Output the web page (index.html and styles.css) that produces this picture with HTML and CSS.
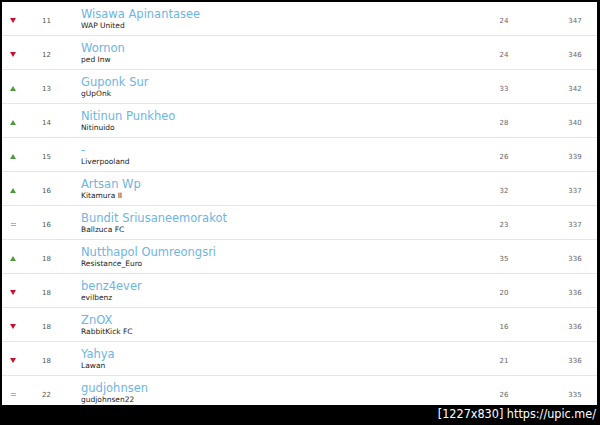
FILE: index.html
```html
<!DOCTYPE html>
<html lang="en">
<head>
    <meta charset="UTF-8">
    <title>Ranking</title>
    <link rel="stylesheet" href="styles.css">
</head>
<body>
    <div class="board">
        <div class="row"><span class="move down"></span><span class="rank">11</span><div class="player"><a class="name">Wisawa Apinantasee</a><span class="team">WAP United</span></div><span class="num">24</span><span class="num">347</span></div>
        <div class="row"><span class="move down"></span><span class="rank">12</span><div class="player"><a class="name">Wornon</a><span class="team">ped Inw</span></div><span class="num">24</span><span class="num">346</span></div>
        <div class="row"><span class="move up"></span><span class="rank">13</span><div class="player"><a class="name">Guponk Sur</a><span class="team">gUpOnk</span></div><span class="num">33</span><span class="num">342</span></div>
        <div class="row"><span class="move up"></span><span class="rank">14</span><div class="player"><a class="name">Nitinun Punkheo</a><span class="team">Nitinuido</span></div><span class="num">28</span><span class="num">340</span></div>
        <div class="row"><span class="move up"></span><span class="rank">15</span><div class="player"><a class="name">-</a><span class="team">Liverpooland</span></div><span class="num">26</span><span class="num">339</span></div>
        <div class="row"><span class="move up"></span><span class="rank">16</span><div class="player"><a class="name">Artsan Wp</a><span class="team">Kitamura II</span></div><span class="num">32</span><span class="num">337</span></div>
        <div class="row"><span class="move same"></span><span class="rank">16</span><div class="player"><a class="name">Bundit Sriusaneemorakot</a><span class="team">Ballzuca FC</span></div><span class="num">23</span><span class="num">337</span></div>
        <div class="row"><span class="move up"></span><span class="rank">18</span><div class="player"><a class="name">Nutthapol Oumreongsri</a><span class="team">Resistance_Euro</span></div><span class="num">35</span><span class="num">336</span></div>
        <div class="row"><span class="move down"></span><span class="rank">18</span><div class="player"><a class="name">benz4ever</a><span class="team">evilbenz</span></div><span class="num">20</span><span class="num">336</span></div>
        <div class="row"><span class="move down"></span><span class="rank">18</span><div class="player"><a class="name">ZnOX</a><span class="team">RabbitKick FC</span></div><span class="num">16</span><span class="num">336</span></div>
        <div class="row"><span class="move down"></span><span class="rank">18</span><div class="player"><a class="name">Yahya</a><span class="team">Lawan</span></div><span class="num">21</span><span class="num">336</span></div>
        <div class="row"><span class="move same"></span><span class="rank">22</span><div class="player"><a class="name">gudjohnsen</a><span class="team">gudjohnsen22</span></div><span class="num">26</span><span class="num">335</span></div>
    </div>
    <div class="stamp">[1227x830] https://upic.me/</div>
</body>
</html>
```

FILE: styles.css
```css
body {
    margin: 0;
    background-color: #000;
    font-family: "DejaVu Sans", Verdana, sans-serif;
    width: 600px;
    height: 425px;
    overflow: hidden;
}

.board {
    margin: 2px 3px 0 2px;
    height: 403px;
    background-color: #fff;
    overflow: hidden;
}

.row {
    display: grid;
    grid-template-columns: 22px 57px 1fr 98px 44px;
    align-items: center;
    padding-top: 1px;
    box-sizing: border-box;
    height: 34px;
    border-bottom: 1px solid #e6e6e6;
}

.move {
    justify-self: center;
    width: 0;
    height: 0;
}

.move.down {
    border-left: 3.5px solid transparent;
    border-right: 3.5px solid transparent;
    border-top: 5px solid #c8102e;
    margin-top: 2px;
}

.move.up {
    border-left: 3px solid transparent;
    border-right: 3px solid transparent;
    border-bottom: 5px solid #4c9b3c;
    margin-top: 2px;
}

.move.same {
    width: 5px;
    height: 1px;
    border-top: 1px solid #8fb8d8;
    border-bottom: 1px solid #8fb8d8;
    margin-top: 3px;
}

.rank {
    padding-left: 18px;
    font-size: 7px;
    color: #555;
    padding-top: 3px;
}

.player {
    display: flex;
    flex-direction: column;
}

.name {
    font-size: 11.5px;
    color: #6db5e3;
    line-height: 13px;
}

.team {
    font-size: 7.5px;
    color: #1a1a1a;
    line-height: 10px;
}

.num {
    text-align: center;
    font-size: 7px;
    color: #666;
    padding-top: 3px;
}

.stamp {
    text-align: right;
    color: #fff;
    font-family: "DejaVu Sans Condensed", "DejaVu Sans", sans-serif;
    font-stretch: condensed;
    font-size: 12.5px;
    padding-right: 4px;
    line-height: 18px;
}
```
